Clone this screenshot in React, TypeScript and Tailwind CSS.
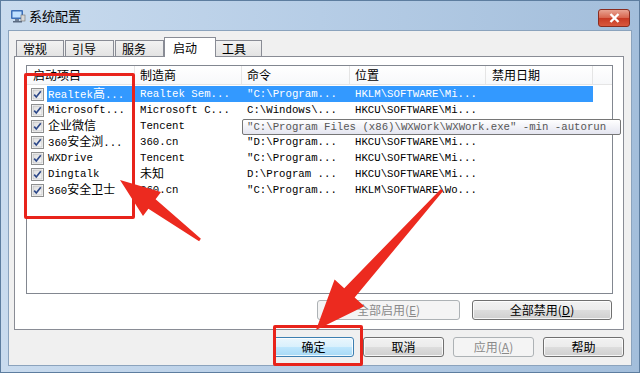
import React from 'react';

type Row = { name: string; maker: string; cmd: string; loc: string; selected?: boolean };

// row 3's command and location sit under the tooltip, so they are left empty
const rows: Row[] = [
  { name: 'Realtek高...', maker: 'Realtek Sem...', cmd: '″C:\\Program...', loc: 'HKLM\\SOFTWARE\\Mi...', selected: true },
  { name: 'Microsoft...', maker: 'Microsoft C...', cmd: 'C:\\Windows\\...', loc: 'HKCU\\SOFTWARE\\Mi...' },
  { name: '企业微信', maker: 'Tencent', cmd: '', loc: '' },
  { name: '360安全浏...', maker: '360.cn', cmd: '″D:\\Program...', loc: 'HKCU\\SOFTWARE\\Mi...' },
  { name: 'WXDrive', maker: 'Tencent', cmd: '″C:\\Program...', loc: 'HKCU\\SOFTWARE\\Mi...' },
  { name: 'Dingtalk', maker: '未知', cmd: 'D:\\Program ...', loc: 'HKCU\\SOFTWARE\\Mi...' },
  { name: '360安全卫士', maker: '360.cn', cmd: '″C:\\Program...', loc: 'HKLM\\SOFTWARE\\Wo...' },
];

// SimSun-ish: latin narrow, CJK a bit bigger
function Mixed({ s }: { s: string }) {
  const parts = s.split(/([\u4e00-\u9fff]+)/);
  return (
    <>
      {parts.map((p, i) =>
        /[\u4e00-\u9fff]/.test(p) ? (
          <span key={i} className="text-[12px] font-['Noto_Sans_CJK_SC',sans-serif]">{p}</span>
        ) : (
          <span key={i}>{p}</span>
        )
      )}
    </>
  );
}

function CheckBox() {
  return (
    <svg width="13" height="13" viewBox="0 0 13 13">
      <defs>
        <linearGradient id="cbg" x1="0" y1="0" x2="1" y2="1">
          <stop offset="0" stopColor="#dcdcdc" />
          <stop offset="1" stopColor="#f8f8f8" />
        </linearGradient>
      </defs>
      <rect x="0.5" y="0.5" width="12" height="12" fill="#fff" stroke="#8e8f8f" />
      <rect x="2" y="2" width="9" height="9" fill="url(#cbg)" stroke="#b0b0b0" strokeWidth="0.6" />
      <path d="M3.2 6.6 L5.3 9 L9.8 3.3" fill="none" stroke="#2f4a8a" strokeWidth="1.7" />
    </svg>
  );
}

function Btn({ label, w, def, disabled }: { label: React.ReactNode; w: string; def?: boolean; disabled?: boolean }) {
  if (disabled) {
    return (
      <div className={`${w} h-[20px] rounded-[3px] border border-[#adb2b5] bg-[#f4f4f4] flex items-center justify-center text-[12px] text-[#8a8a8a]`}>
        {label}
      </div>
    );
  }
  return (
    <div
      className={`${w} h-[20px] rounded-[3px] border ${
        def
          ? 'border-[#3c7fb1] bg-[linear-gradient(#eaf6fd_0%,#d9f0fc_50%,#bee6fd_51%,#a7d9f5_100%)]'
          : 'border-[#707070] bg-[linear-gradient(#f2f2f2_0%,#ebebeb_50%,#dddddd_51%,#cfcfcf_100%)]'
      } shadow-[inset_0_0_0_1px_rgba(255,255,255,0.8)] flex items-center justify-center text-[12px] text-black`}
    >
      {label}
    </div>
  );
}

function Arrow({ tx, ty, px, py, L, W, w0, w1 }: { tx: number; ty: number; px: number; py: number; L: number; W: number; w0: number; w1: number }) {
  const dx = px - tx;
  const dy = py - ty;
  const len = Math.hypot(dx, dy);
  const ux = dx / len;
  const uy = dy / len;
  const nx = -uy;
  const ny = ux;
  const bx = px - ux * L;
  const by = py - uy * L;
  const pts = [
    [tx + (nx * w0) / 2, ty + (ny * w0) / 2],
    [bx + (nx * w1) / 2, by + (ny * w1) / 2],
    [bx + (nx * W) / 2, by + (ny * W) / 2],
    [px, py],
    [bx - (nx * W) / 2, by - (ny * W) / 2],
    [bx - (nx * w1) / 2, by - (ny * w1) / 2],
    [tx - (nx * w0) / 2, ty - (ny * w0) / 2],
  ]
    .map((p) => p.join(','))
    .join(' ');
  return <polygon points={pts} fill="#ec2a1f" />;
}

export default function App() {
  return (
    <div className="w-[640px] h-[373px] relative overflow-hidden flex flex-col bg-[linear-gradient(90deg,#c9dbee_0%,#b6cde6_50%,#a3bedb_100%)] border border-[#5d7d9f] font-['Noto_Sans_CJK_SC',sans-serif]">
      {/* title bar */}
      <div className="h-[29px] flex items-start pl-[9px] pr-[9px] shrink-0">
        <svg width="16" height="16" viewBox="0 0 16 16" className="mt-[7px]">
          <rect x="1" y="2" width="12" height="9" rx="1" fill="#3d6fb8" />
          <rect x="2.5" y="3.5" width="9" height="6" fill="#bfe0ff" />
          <rect x="5" y="11" width="4" height="2" fill="#6f7f95" />
          <rect x="3" y="13" width="9" height="1.5" fill="#5b6b82" />
          <rect x="11" y="7" width="4" height="6" fill="#d8d8d8" stroke="#707070" strokeWidth="0.6" />
        </svg>
        <div className="ml-[3px] mt-[7px] text-[13px] leading-[16px] text-black">系统配置</div>
        <div className="ml-auto mt-[8px] w-[32px] h-[18px] rounded-[3px] border border-[#8a2d20] bg-[linear-gradient(#e8a392_0%,#d8664f_48%,#c73a24_52%,#d9583e_100%)] flex items-center justify-center">
          <svg width="11" height="10" viewBox="0 0 11 10">
            <path d="M1.5 1 L9.5 9 M9.5 1 L1.5 9" stroke="#fff" strokeWidth="2.4" />
          </svg>
        </div>
      </div>

      {/* body */}
      <div className="mx-[7px] h-[336px] bg-[#f0f0f0] border border-[#8ba3bd] flex flex-col shrink-0">
        {/* tabs */}
        <div className="mt-[6px] ml-[7px] h-[19px] flex items-end text-[12px] text-black">
          <div className="w-[48px] h-[16px] border border-b-0 border-[#898c95] bg-[linear-gradient(#f2f2f2,#e3e3e3)] flex items-center pl-[6px] leading-none">常规</div>
          <div className="ml-[1px] w-[49px] h-[16px] border border-b-0 border-[#898c95] bg-[linear-gradient(#f2f2f2,#e3e3e3)] flex items-center pl-[6px] leading-none">引导</div>
          <div className="ml-[1px] w-[49px] h-[16px] border border-b-0 border-[#898c95] bg-[linear-gradient(#f2f2f2,#e3e3e3)] flex items-center pl-[6px] leading-none">服务</div>
          <div className="w-[52px] h-[20px] -mb-[1px] border border-b-0 border-[#898c95] bg-white flex items-center pl-[8px] leading-none relative z-10">启动</div>
          <div className="w-[46px] h-[16px] border border-b-0 border-l-0 border-[#898c95] bg-[linear-gradient(#f2f2f2,#e3e3e3)] flex items-center pl-[6px] leading-none">工具</div>
        </div>

        {/* tab panel */}
        <div className="ml-[5px] w-[610px] h-[274px] border border-[#898c95] bg-white flex flex-col">
          {/* list view */}
          <div className="mt-[8px] ml-[11px] w-[587px] h-[229px] border border-[#828790] bg-white relative">
            <div className="h-[19px] flex text-[12px] text-black bg-[linear-gradient(#ffffff,#f7f8fa)] border-b border-[#e5e5e5]">
              <div className="w-[108px] pl-[6px] border-r border-[#e5e5e5] flex items-center">启动项目</div>
              <div className="w-[107px] pl-[5px] border-r border-[#e5e5e5] flex items-center">制造商</div>
              <div className="w-[108px] pl-[5px] border-r border-[#e5e5e5] flex items-center">命令</div>
              <div className="w-[136px] pl-[5px] border-r border-[#e5e5e5] flex items-center">位置</div>
              <div className="w-[107px] pl-[6px] border-r border-[#e5e5e5] flex items-center">禁用日期</div>
            </div>
            <div className="pt-[1px] font-['Liberation_Mono','Noto_Sans_CJK_SC',monospace] text-[10.7px] text-black">
              {rows.map((r, i) => (
                <div key={i} className="h-[16px] flex items-center whitespace-nowrap">
                  <div className="w-[20px] pl-[4px] flex items-center">
                    <CheckBox />
                  </div>
                  <div className={`flex h-full items-center ${r.selected ? 'bg-[#3399ff] text-white' : ''}`}>
                    <div className="w-[88px] pl-[1px]"><Mixed s={r.name} /></div>
                    <div className="w-[107px] pl-[5px]"><Mixed s={r.maker} /></div>
                    <div className="w-[108px] pl-[5px]"><Mixed s={r.cmd} /></div>
                    <div className="w-[136px] pl-[5px]"><Mixed s={r.loc} /></div>
                    <div className="w-[107px]" />
                  </div>
                </div>
              ))}
            </div>

            {/* tooltip over the 企业微信 command */}
            <div className="absolute left-[215px] top-[53px] w-[379px] h-[16px] border border-[#767676] rounded-[2px] bg-[linear-gradient(#ffffff,#e4e5f0)] flex items-center pl-[4px] font-['Liberation_Mono',monospace] text-[10.7px] text-[#575757] whitespace-nowrap">
              ″C:\Program Files (x86)\WXWork\WXWork.exe″ -min -autorun
            </div>
          </div>

          {/* enable / disable all */}
          <div className="mt-[6px] pr-[11px] flex justify-end gap-[12px]">
            <Btn w="w-[143px]" disabled label={<span>全部启用(<span className="underline">E</span>)</span>} />
            <Btn w="w-[140px]" label={<span>全部禁用(<span className="underline">D</span>)</span>} />
          </div>
        </div>

        {/* dialog buttons */}
        <div className="mt-[7px] pr-[7px] flex justify-end gap-[9px]">
          <Btn w="w-[81px]" def label="确定" />
          <Btn w="w-[81px]" label="取消" />
          <Btn w="w-[81px]" disabled label={<span>应用(<span className="underline">A</span>)</span>} />
          <Btn w="w-[81px]" label="帮助" />
        </div>
      </div>

      {/* red annotations */}
      <div className="absolute left-[23px] top-[72px] w-[111px] h-[146px] border-[3px] border-[#e8231b] rounded-[2px] pointer-events-none" />
      <div className="absolute left-[272px] top-[324px] w-[90px] h-[41px] border-[3px] border-[#e8231b] rounded-[2px] pointer-events-none" />
      <svg className="absolute left-0 top-0 pointer-events-none" width="640" height="373">
        <Arrow tx={199} ty={239} px={119} py={179} L={40} W={30} w0={3} w1={12} />
        <Arrow tx={441} ty={189} px={315} py={329} L={50} W={40} w0={3} w1={14} />
      </svg>
    </div>
  );
}
